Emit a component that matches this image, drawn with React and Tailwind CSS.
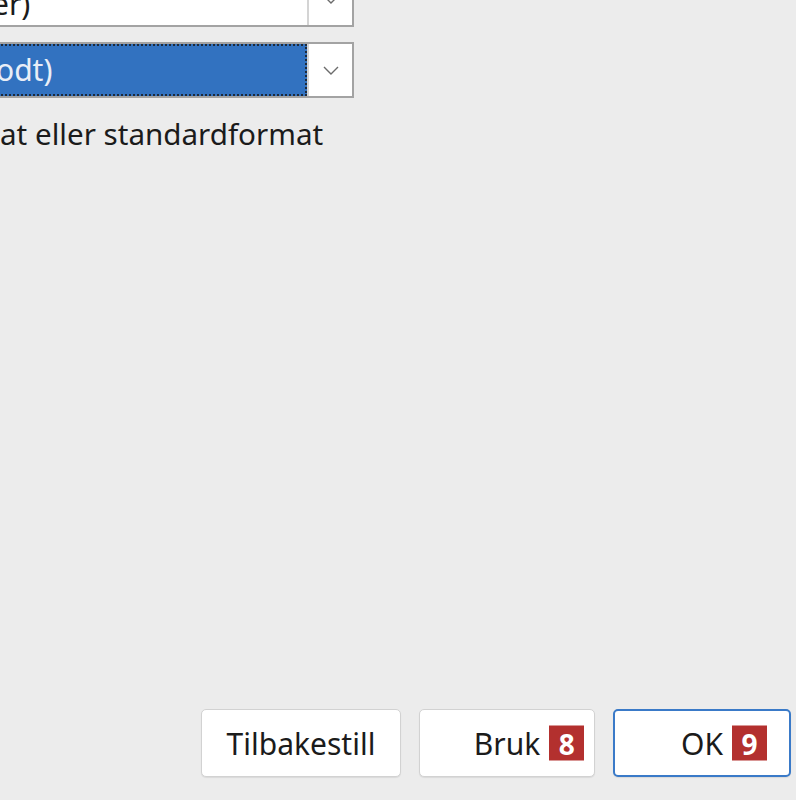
import React from 'react';

const font = { fontFamily: '"Noto Sans", "Open Sans", sans-serif' };

const Chevron = () => (
  <svg width="16" height="9" viewBox="0 0 16 9" fill="none">
    <path d="M1 1l7 7 7-7" stroke="#6b6b6b" strokeWidth="1.4" />
  </svg>
);

const Select = ({ children, focused, className = '' }) => (
  <div className={`flex h-[56px] w-[364px] ml-[-10px] border-2 border-[#a3a3a3] bg-white ${className}`}>
    <div
      className={`flex-1 flex items-center overflow-hidden pl-[11px] text-[30px] leading-none ${
        focused ? 'bg-[#3272c0] text-[#e9eef7] outline-2 outline-dotted outline-[#1d2a3a] outline-offset-[-2px]' : 'text-[#1b1b1b]'
      }`}
    >
      {children}
    </div>
    <div className="w-[45px] flex items-center justify-center border-l-2 border-[#d4d4d4] bg-white">
      <Chevron />
    </div>
  </div>
);

const Badge = ({ n }) => (
  <span className="absolute left-full top-1/2 -translate-y-1/2 ml-[9px] w-[35px] h-[35px] bg-[#b3302e] text-white text-[28px] font-bold flex items-center justify-center leading-none">
    {n}
  </span>
);

const Btn = ({ label, badge, primary, width }) => (
  <button
    className={`h-[68px] ${width} rounded-[5px] bg-white flex items-center justify-center text-[30px] text-[#1b1b1b] shadow-[0_1px_1px_rgba(0,0,0,0.08)] ${
      primary ? 'border-2 border-[#3a7ac8]' : 'border border-[#d2d2d2]'
    }`}
  >
    <span className="relative">
      {label}
      {badge && <Badge n={badge} />}
    </span>
  </button>
);

export default function App() {
  return (
    <div className="w-[796px] h-[800px] overflow-hidden bg-[#ececec] flex flex-col" style={font}>
      <div className="flex flex-col gap-[15px] mt-[-29px]">
        <Select>
          <span className="ml-[-11px] pt-[9px]">er)</span>
        </Select>
        <Select focused>
          <span className="ml-[-7px]">odt)</span>
        </Select>
      </div>
      <p className="mt-[16px] text-[29.6px] leading-[40px] text-[#1b1b1b]">at eller standardformat</p>
      <div className="flex-1" />
      <div className="flex justify-end gap-[18px] pr-[5px] pb-[23px]">
        <Btn label="Tilbakestill" width="w-[200px]" />
        <Btn label="Bruk" badge="8" width="w-[176px]" />
        <Btn label="OK" badge="9" primary width="w-[178px]" />
      </div>
    </div>
  );
}
